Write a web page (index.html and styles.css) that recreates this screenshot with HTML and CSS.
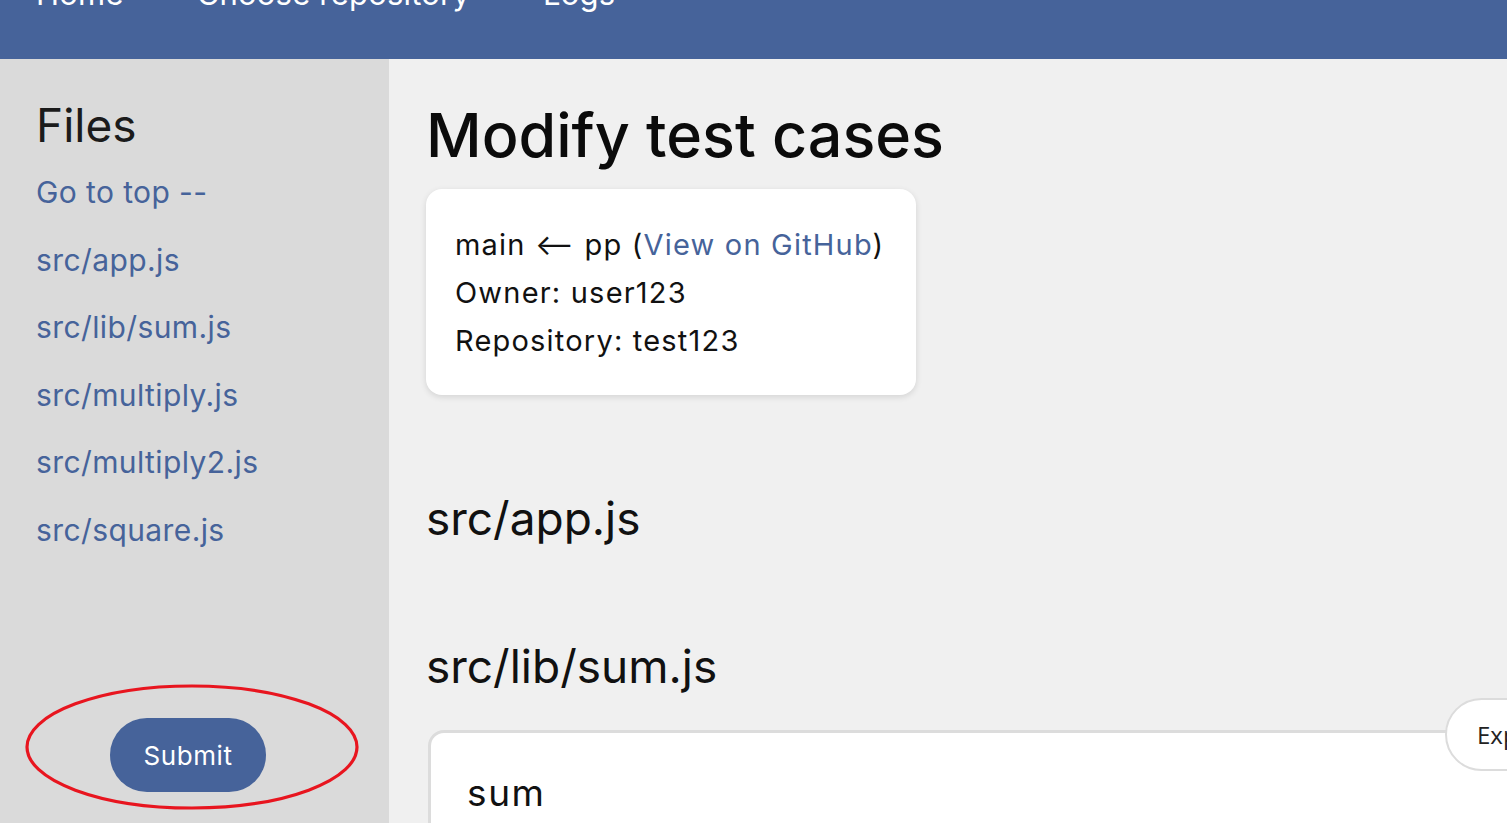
FILE: index.html
```html
<!DOCTYPE html>
<html lang="en">
<head>
<meta charset="utf-8">
<title>Modify test cases</title>
<link rel="stylesheet" href="styles.css">
</head>
<body>
<nav class="topnav">
  <ul class="topnav-list">
    <li><a href="#" class="topnav-link">Home</a></li>
    <li><a href="#" class="topnav-link">Choose repository</a></li>
    <li><a href="#" class="topnav-link">Logs</a></li>
  </ul>
</nav>
<div class="layout">
  <aside class="sidebar">
    <h2 class="sidebar-title">Files</h2>
    <ul class="file-list">
      <li><a href="#" class="file-link">Go to top --</a></li>
      <li><a href="#" class="file-link">src/app.js</a></li>
      <li><a href="#" class="file-link">src/lib/sum.js</a></li>
      <li><a href="#" class="file-link">src/multiply.js</a></li>
      <li><a href="#" class="file-link">src/multiply2.js</a></li>
      <li><a href="#" class="file-link">src/square.js</a></li>
    </ul>
    <div class="submit-wrap">
      <button class="submit-btn" type="button">Submit</button>
    </div>
    <svg class="annotation" width="340" height="130" viewBox="0 0 340 130" aria-hidden="true">
      <ellipse cx="167" cy="63" rx="165" ry="61" fill="none" stroke="#e8151f" stroke-width="3.2"/>
    </svg>
  </aside>
  <main class="content">
    <h1 class="page-title">Modify test cases</h1>
    <section class="pr-card">
      <p class="pr-line">main ⟵ pp (<a href="#" class="gh-link">View on GitHub</a>)</p>
      <p class="pr-line">Owner: user123</p>
      <p class="pr-line">Repository: test123</p>
    </section>
    <h2 class="file-heading">src/app.js</h2>
    <h2 class="file-heading">src/lib/sum.js</h2>
    <section class="fn-card">
      <h3 class="fn-name">sum</h3>
    </section>
    <button class="expand-btn" type="button">Expand all</button>
  </main>
</div>
</body>
</html>
```
FILE: styles.css
```css
html, body {
  margin: 0;
  padding: 0;
  height: 823px;
  overflow: hidden;
}
body {
  font-family: Inter, "Open Sans", "DejaVu Sans", sans-serif;
  background: #f0f0f0;
  color: #111;
}
.topnav {
  height: 59px;
  background: #46639a;
  overflow: hidden;
}
.topnav-list {
  list-style: none;
  margin: -22px 0 0 0;
  padding: 0 0 0 36px;
  display: flex;
  gap: 73px;
}
.topnav-link {
  color: #fff;
  text-decoration: none;
  font-size: 31px;
  line-height: 32px;
  letter-spacing: 0.2px;
}
.layout {
  display: flex;
  height: 764px;
}
.sidebar {
  position: relative;
  width: 389px;
  flex: none;
  box-sizing: border-box;
  background: #dadada;
  padding: 38px 49px 31px 36px;
  display: flex;
  flex-direction: column;
}
.sidebar-title {
  margin: 0;
  font-weight: 400;
  font-size: 46px;
  line-height: 56px;
  color: #1b1b1b;
}
.file-list {
  list-style: none;
  margin: 19px 0 0 0;
  padding: 0;
  display: flex;
  flex-direction: column;
  gap: 27.5px;
}
.file-link {
  color: #46639a;
  text-decoration: none;
  font-size: 30px;
  line-height: 40px;
  letter-spacing: 0.4px;
  display: block;
}
.submit-wrap {
  margin-top: auto;
  display: flex;
  justify-content: center;
}
.submit-btn {
  width: 156px;
  height: 74px;
  border: none;
  border-radius: 37px;
  background: #46639a;
  color: #fff;
  font-family: inherit;
  font-size: 26px;
  letter-spacing: 0.6px;
}
.annotation {
  position: absolute;
  left: 25px;
  top: 625px;
}
.content {
  position: relative;
  flex: 1;
  padding: 36px 0 0 426px;
  margin-left: -389px;
  min-width: 0;
}
.page-title {
  margin: 0;
  font-weight: 500;
  font-size: 61px;
  line-height: 80px;
  color: #0b0b0b;
}
.pr-card {
  margin-top: 14px;
  width: 490px;
  box-sizing: border-box;
  background: #fff;
  border-radius: 16px;
  padding: 32px 20px 30px 29px;
  box-shadow: 0 2px 6px rgba(0,0,0,0.12);
}
.pr-line {
  margin: 0;
  font-size: 29px;
  line-height: 48px;
  letter-spacing: 1.2px;
  white-space: nowrap;
}
.gh-link {
  color: #46639a;
  text-decoration: none;
}
.file-heading {
  margin: 93px 0 0 0;
  font-weight: 400;
  font-size: 46px;
  line-height: 60px;
}
.file-heading + .file-heading {
  margin-top: 88px;
}
.fn-card {
  margin: 34px 0 0 2px;
  width: 1150px;
  height: 200px;
  background: #fff;
  border: 3px solid #dcdcdc;
  border-radius: 16px;
  box-sizing: border-box;
  padding: 40px 36px;
}
.fn-name {
  margin: 0;
  font-weight: 400;
  font-size: 37px;
  line-height: 40px;
  letter-spacing: 1.6px;
}
.expand-btn {
  position: absolute;
  left: 1445px;
  top: 639px;
  height: 73px;
  width: 200px;
  padding: 0 0 0 30px;
  text-align: left;
  background: #fff;
  border: 2px solid #dcdcdc;
  border-radius: 37px;
  font-family: "Open Sans", sans-serif;
  font-size: 24px;
  color: #222;
}
```
